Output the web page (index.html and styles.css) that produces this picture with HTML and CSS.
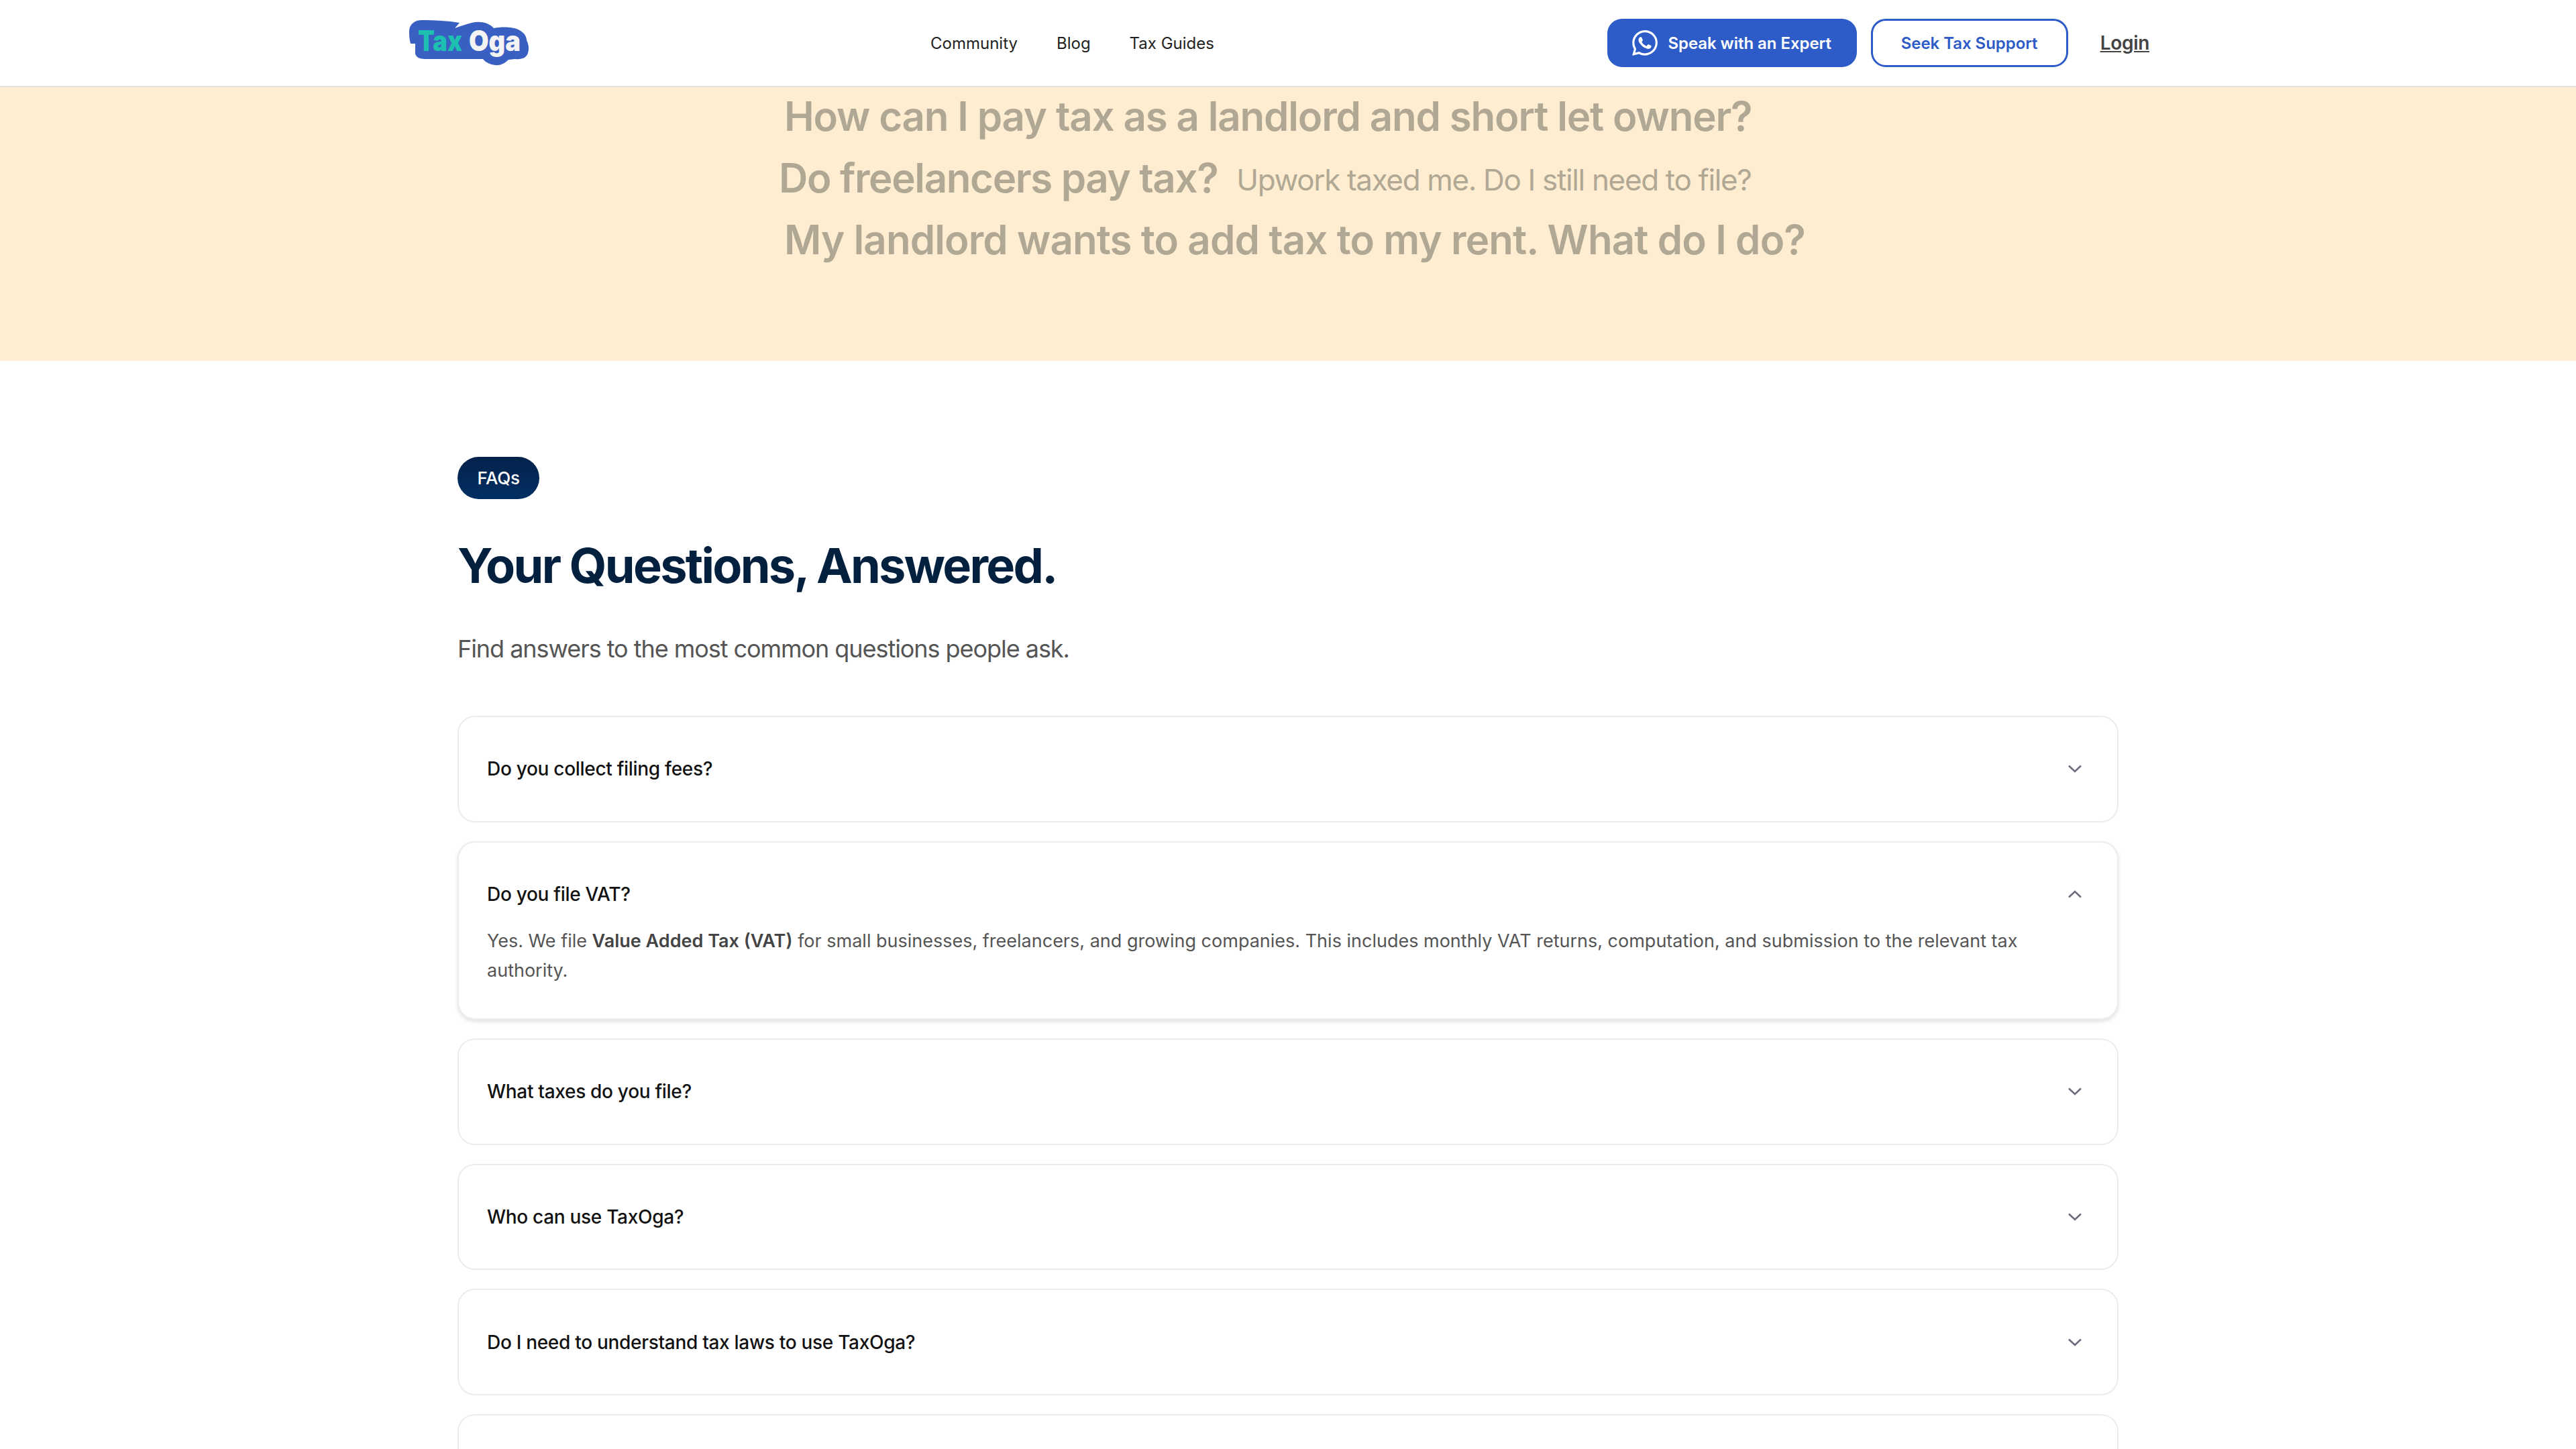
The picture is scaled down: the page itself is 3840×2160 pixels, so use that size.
FILE: index.html
```html
<!DOCTYPE html>
<html lang="en">
<head>
    <meta charset="UTF-8">
    <meta name="viewport" content="width=device-width, initial-scale=1.0">
    <title>TaxOga</title>
    <link rel="stylesheet" href="styles.css">
</head>
<body>

<header class="top_bar">
    <a class="logo" href="#">
        <svg width="178" height="68" viewBox="0 0 178 68">
            <path fill="#3a5fc2" d="M0 17C0 6 8 0 19 0C38 0 58 1 75 4L68 12C76 9 85 6 93 4C106 1 119 4 126 12C135 10 148 10 157 12C168 15 175 22 175 30C178 36 179 42 177 49C175 56 168 59 158 58L148 59C142 65 135 68 128 67C120 66 114 63 110 58L24 58C15 58 10 55 9 50L9 35L2 35C0 28 0 22 0 17Z"/>
            <text class="logo_tax" x="13" y="46" textLength="66" lengthAdjust="spacingAndGlyphs">Tax</text>
            <text class="logo_oga" x="89" y="46" textLength="77" lengthAdjust="spacingAndGlyphs">Oga</text>
        </svg>
    </a>
    <nav class="main_nav">
        <a href="#">Community</a>
        <a href="#">Blog</a>
        <a href="#">Tax Guides</a>
    </nav>
    <div class="top_actions">
        <a class="btn btn_blue" href="#">
            <svg width="38" height="38" viewBox="0 0 24 24" fill="#fff"><path d="M17.472 14.382c-.297-.149-1.758-.867-2.03-.967-.273-.099-.471-.148-.67.15-.197.297-.767.966-.94 1.164-.173.199-.347.223-.644.075-.297-.15-1.255-.463-2.39-1.475-.883-.788-1.48-1.761-1.653-2.059-.173-.297-.018-.458.13-.606.134-.133.298-.347.446-.52.149-.174.198-.298.298-.497.099-.198.05-.371-.025-.52-.075-.149-.669-1.612-.916-2.207-.242-.579-.487-.5-.669-.51-.173-.008-.371-.01-.57-.01-.198 0-.52.074-.792.372-.272.297-1.04 1.016-1.04 2.479 0 1.462 1.065 2.875 1.213 3.074.149.198 2.096 3.2 5.077 4.487.709.306 1.262.489 1.694.625.712.227 1.36.195 1.871.118.571-.085 1.758-.719 2.006-1.413.248-.694.248-1.289.173-1.413-.074-.124-.272-.198-.57-.347m-5.421 7.403h-.004a9.87 9.87 0 01-5.031-1.378l-.361-.214-3.741.982.998-3.648-.235-.374a9.86 9.86 0 01-1.51-5.26c.001-5.45 4.436-9.884 9.888-9.884 2.64 0 5.122 1.03 6.988 2.898a9.825 9.825 0 012.893 6.994c-.003 5.45-4.437 9.884-9.885 9.884m8.413-18.297A11.815 11.815 0 0012.05 0C5.495 0 .16 5.335.157 11.892c0 2.096.547 4.142 1.588 5.945L.057 24l6.305-1.654a11.882 11.882 0 005.683 1.448h.005c6.554 0 11.89-5.335 11.893-11.893a11.821 11.821 0 00-3.48-8.413z"/></svg>
            Speak with an Expert
        </a>
        <a class="btn btn_line" href="#">Seek Tax Support</a>
        <a class="login" href="#">Login</a>
    </div>
</header>

<section class="ticker">
    <p class="ticker_line">How can I pay tax as a landlord and short let owner?</p>
    <p class="ticker_line line_two">Do freelancers pay tax? <span class="ticker_small">Upwork taxed me. Do I still need to file?</span></p>
    <p class="ticker_line line_three">My landlord wants to add tax to my rent. What do I do?</p>
</section>

<main class="faq_section">
    <span class="faq_pill">FAQs</span>
    <h1>Your Questions, Answered.</h1>
    <p class="faq_sub">Find answers to the most common questions people ask.</p>

    <div class="faq_list">
        <div class="faq_card">
            <div class="faq_head">
                <span>Do you collect filing fees?</span>
                <svg class="chev" width="22" height="14" viewBox="0 0 22 14"><path d="M2 2.5L11 11L20 2.5"/></svg>
            </div>
        </div>
        <div class="faq_card open">
            <div class="faq_head">
                <span>Do you file VAT?</span>
                <svg class="chev" width="22" height="14" viewBox="0 0 22 14"><path d="M2 11.5L11 3L20 11.5"/></svg>
            </div>
            <p class="faq_answer">Yes. We file <b>Value Added Tax (VAT)</b> for small businesses, freelancers, and growing companies. This includes monthly VAT returns, computation, and submission to the relevant tax authority.</p>
        </div>
        <div class="faq_card">
            <div class="faq_head">
                <span>What taxes do you file?</span>
                <svg class="chev" width="22" height="14" viewBox="0 0 22 14"><path d="M2 2.5L11 11L20 2.5"/></svg>
            </div>
        </div>
        <div class="faq_card">
            <div class="faq_head">
                <span>Who can use TaxOga?</span>
                <svg class="chev" width="22" height="14" viewBox="0 0 22 14"><path d="M2 2.5L11 11L20 2.5"/></svg>
            </div>
        </div>
        <div class="faq_card">
            <div class="faq_head">
                <span>Do I need to understand tax laws to use TaxOga?</span>
                <svg class="chev" width="22" height="14" viewBox="0 0 22 14"><path d="M2 2.5L11 11L20 2.5"/></svg>
            </div>
        </div>
        <div class="faq_card">
            <div class="faq_head"></div>
        </div>
    </div>
</main>

</body>
</html>
```

FILE: styles.css
```css
* {
  box-sizing: border-box;
}

html,
body {
  margin: 0;
  height: 100%;
  overflow: hidden;
  background: #fff;
}

body {
  font-family: 'Inter', 'Lato', sans-serif;
  color: #111;
}

a {
  text-decoration: none;
  color: inherit;
}

p,
h1 {
  margin: 0;
}

.top_bar {
  display: flex;
  align-items: center;
  height: 130px;
  padding: 0 636px 0 610px;
  background: #fff;
  border-bottom: 2px solid #e2dfdf;
}

.logo {
  display: block;
  height: 68px;
  margin-top: -1px;
}

.logo_tax,
.logo_oga {
  font-family: 'Inter', sans-serif;
  font-weight: 900;
  font-size: 42px;
}

.logo_tax {
  fill: #1cbfb0;
}

.logo_oga {
  fill: #f3f3f3;
}

.main_nav {
  display: flex;
  gap: 58px;
  margin-left: 599px;
  font-size: 24px;
  color: #222;
}

.top_actions {
  display: flex;
  align-items: center;
  margin-left: auto;
}

.btn {
  display: flex;
  align-items: center;
  justify-content: center;
  height: 72px;
  border-radius: 22px;
  font-size: 24px;
  font-weight: 600;
  letter-spacing: -0.05px;
}

.btn_blue {
  width: 372px;
  gap: 15px;
  background: #2d5bc7;
  color: #fff;
}

.btn_line {
  width: 294px;
  margin-left: 21px;
  border: 3px solid #2d5bc7;
  color: #2d5bc7;
}

.login {
  margin-left: 48px;
  font-size: 28px;
  font-weight: 600;
  letter-spacing: -0.3px;
  color: #444;
  text-decoration: underline;
}

.ticker {
  height: 408px;
  padding: 1px 0 0 1169px;
  background: #feedd0;
  color: #b0a894;
  font-size: 60px;
  font-weight: 600;
  letter-spacing: -1.17px;
}

.ticker_line {
  line-height: 84px;
  height: 92px;
  white-space: nowrap;
}

.line_two {
  margin-left: -8px;
  letter-spacing: -1.35px;
}

.line_three {
  letter-spacing: -0.9px;
}

.ticker_small {
  margin-left: 14px;
  font-size: 44px;
  font-weight: 400;
  letter-spacing: -1.35px;
  vertical-align: 3px;
}

.faq_section {
  width: 2476px;
  margin: 0 auto;
  padding-top: 143px;
}

.faq_pill {
  display: inline-flex;
  align-items: center;
  justify-content: center;
  width: 122px;
  height: 63px;
  border-radius: 32px;
  background: linear-gradient(#04224a, #012f63);
  color: #fff;
  font-size: 26px;
  font-weight: 500;
  letter-spacing: -0.3px;
}

h1 {
  margin-top: 51px;
  font-size: 72px;
  line-height: 96px;
  font-weight: 700;
  letter-spacing: -2.7px;
  color: #03213f;
}

.faq_sub {
  margin-top: 52px;
  font-size: 36px;
  line-height: 48px;
  letter-spacing: -1.05px;
  color: #555;
}

.faq_list {
  display: flex;
  flex-direction: column;
  gap: 28px;
  margin-top: 76px;
}

.faq_card {
  border: 2px solid #ececec;
  border-radius: 26px;
  background: #fff;
}

.faq_card.open {
  box-shadow: 0 3px 6px rgba(0, 0, 0, 0.12);
}

.faq_head {
  display: flex;
  align-items: center;
  justify-content: space-between;
  height: 154.6px;
  padding: 0 52px 0 42px;
  font-size: 28px;
  font-weight: 500;
  letter-spacing: -0.3px;
  color: #111;
}

.chev {
  fill: none;
  stroke: #6c6c7c;
  stroke-width: 2.6;
}

.faq_answer {
  padding: 0 52px 49px 42px;
  margin-top: -29px;
  font-size: 27px;
  line-height: 44px;
  color: #555;
}

.faq_answer b {
  font-weight: 600;
  color: #444;
}
```
